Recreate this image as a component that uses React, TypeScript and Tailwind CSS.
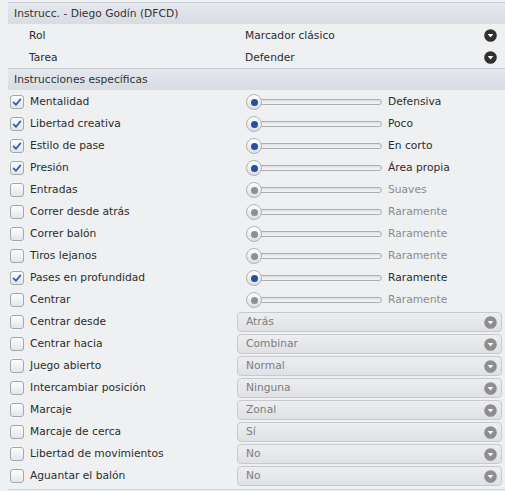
import React from "react";

type SliderRow = { label: string; checked: boolean; value: string };
type DropRow = { label: string; value: string };

const sliders: SliderRow[] = [
  { label: "Mentalidad", checked: true, value: "Defensiva" },
  { label: "Libertad creativa", checked: true, value: "Poco" },
  { label: "Estilo de pase", checked: true, value: "En corto" },
  { label: "Presión", checked: true, value: "Área propia" },
  { label: "Entradas", checked: false, value: "Suaves" },
  { label: "Correr desde atrás", checked: false, value: "Raramente" },
  { label: "Correr balón", checked: false, value: "Raramente" },
  { label: "Tiros lejanos", checked: false, value: "Raramente" },
  { label: "Pases en profundidad", checked: true, value: "Raramente" },
  { label: "Centrar", checked: false, value: "Raramente" },
];

const drops: DropRow[] = [
  { label: "Centrar desde", value: "Atrás" },
  { label: "Centrar hacia", value: "Combinar" },
  { label: "Juego abierto", value: "Normal" },
  { label: "Intercambiar posición", value: "Ninguna" },
  { label: "Marcaje", value: "Zonal" },
  { label: "Marcaje de cerca", value: "Sí" },
  { label: "Libertad de movimientos", value: "No" },
  { label: "Aguantar el balón", value: "No" },
];

function Arrow({ dark }: { dark: boolean }) {
  return (
    <svg width="13" height="13" viewBox="0 0 13 13" className="shrink-0">
      <circle cx="6.5" cy="6.5" r="6.3" fill={dark ? "#303030" : "#8e8e8e"} />
      <polygon points="3.7,5 9.3,5 6.5,8.6" fill="#ffffff" />
    </svg>
  );
}

function Checkbox({ checked }: { checked: boolean }) {
  return (
    <div className="w-[14px] h-[14px] shrink-0 rounded-[3px] border border-[#a4a9b0] bg-gradient-to-b from-[#fdfdfd] to-[#e3e5e8] flex items-center justify-center">
      {checked && (
        <svg width="12" height="12" viewBox="0 0 12 12">
          <polyline
            points="2.6,6.4 5,8.8 9.4,3.4"
            fill="none"
            stroke="#2f5fae"
            strokeWidth="1.7"
            strokeLinecap="round"
            strokeLinejoin="round"
          />
        </svg>
      )}
    </div>
  );
}

function Slider({ enabled }: { enabled: boolean }) {
  return (
    <div className="relative w-[136px] h-[16px] shrink-0">
      <div className="absolute left-[8px] right-0 top-[5px] h-[6px] rounded-r-full border border-[#a9adb2] bg-gradient-to-b from-[#dfe1e4] to-[#f4f5f6]" />
      <div className="absolute left-0 top-0 w-[16px] h-[16px] rounded-full border border-[#aeb2b7] bg-gradient-to-b from-[#ffffff] to-[#dcdee1] flex items-center justify-center">
        <div
          className={
            enabled
              ? "w-[7px] h-[7px] rounded-full bg-[#2a4e9e]"
              : "w-[7px] h-[7px] rounded-full bg-[#8e8f91]"
          }
        />
      </div>
    </div>
  );
}

function Header({ text }: { text: string }) {
  return (
    <div className="ml-[8px] h-[22px] flex items-center pl-[6px] pt-[2px] border-t border-[#c9ced6] bg-gradient-to-b from-[#e5e8ed] to-[#d8dce3] text-[#333333]">
      {text}
    </div>
  );
}

export default function App() {
  return (
    <div
      className="w-[505px] h-[491px] overflow-hidden bg-[#eef0f2] pt-[2px] text-[10.7px] text-[#2c2c2c] leading-none"
      style={{ fontFamily: '"DejaVu Sans", sans-serif' }}
    >
      <Header text="Instrucc. - Diego Godín (DFCD)" />
      {[
        { l: "Rol", v: "Marcador clásico" },
        { l: "Tarea", v: "Defender" },
      ].map((r) => (
        <div key={r.l} className="h-[22px] pt-[2px] flex items-center">
          <div className="w-[245px] pl-[29px] shrink-0">{r.l}</div>
          <div className="flex-1">{r.v}</div>
          <div className="mr-[8px] -mt-[2px]">
            <Arrow dark={true} />
          </div>
        </div>
      ))}
      <Header text="Instrucciones específicas" />
      {sliders.map((r) => (
        <div key={r.label} className="h-[22px] pt-[2px] flex items-center">
          <div className="w-[246px] shrink-0 flex items-center pl-[10px] gap-[6px]">
            <Checkbox checked={r.checked} />
            <span>{r.label}</span>
          </div>
          <Slider enabled={r.checked} />
          <span className={r.checked ? "ml-[6px] text-[#2c2c2c]" : "ml-[6px] text-[#8c8c8c]"}>
            {r.value}
          </span>
        </div>
      ))}
      {drops.map((r) => (
        <div key={r.label} className="h-[22px] pt-[2px] flex items-center">
          <div className="w-[237px] shrink-0 flex items-center pl-[10px] gap-[6px]">
            <Checkbox checked={false} />
            <span>{r.label}</span>
          </div>
          <div className="w-[265px] h-[20px] shrink-0 rounded-[4px] border border-[#c6c9cd] bg-gradient-to-b from-[#eceef0] to-[#dfe1e4] flex items-center pl-[8px] pr-[4px] text-[#7e7e7e]">
            <span className="flex-1">{r.value}</span>
            <Arrow dark={false} />
          </div>
        </div>
      ))}
      <div className="ml-[8px] mt-[3px] border-t border-[#cfd3d8]" />
    </div>
  );
}
